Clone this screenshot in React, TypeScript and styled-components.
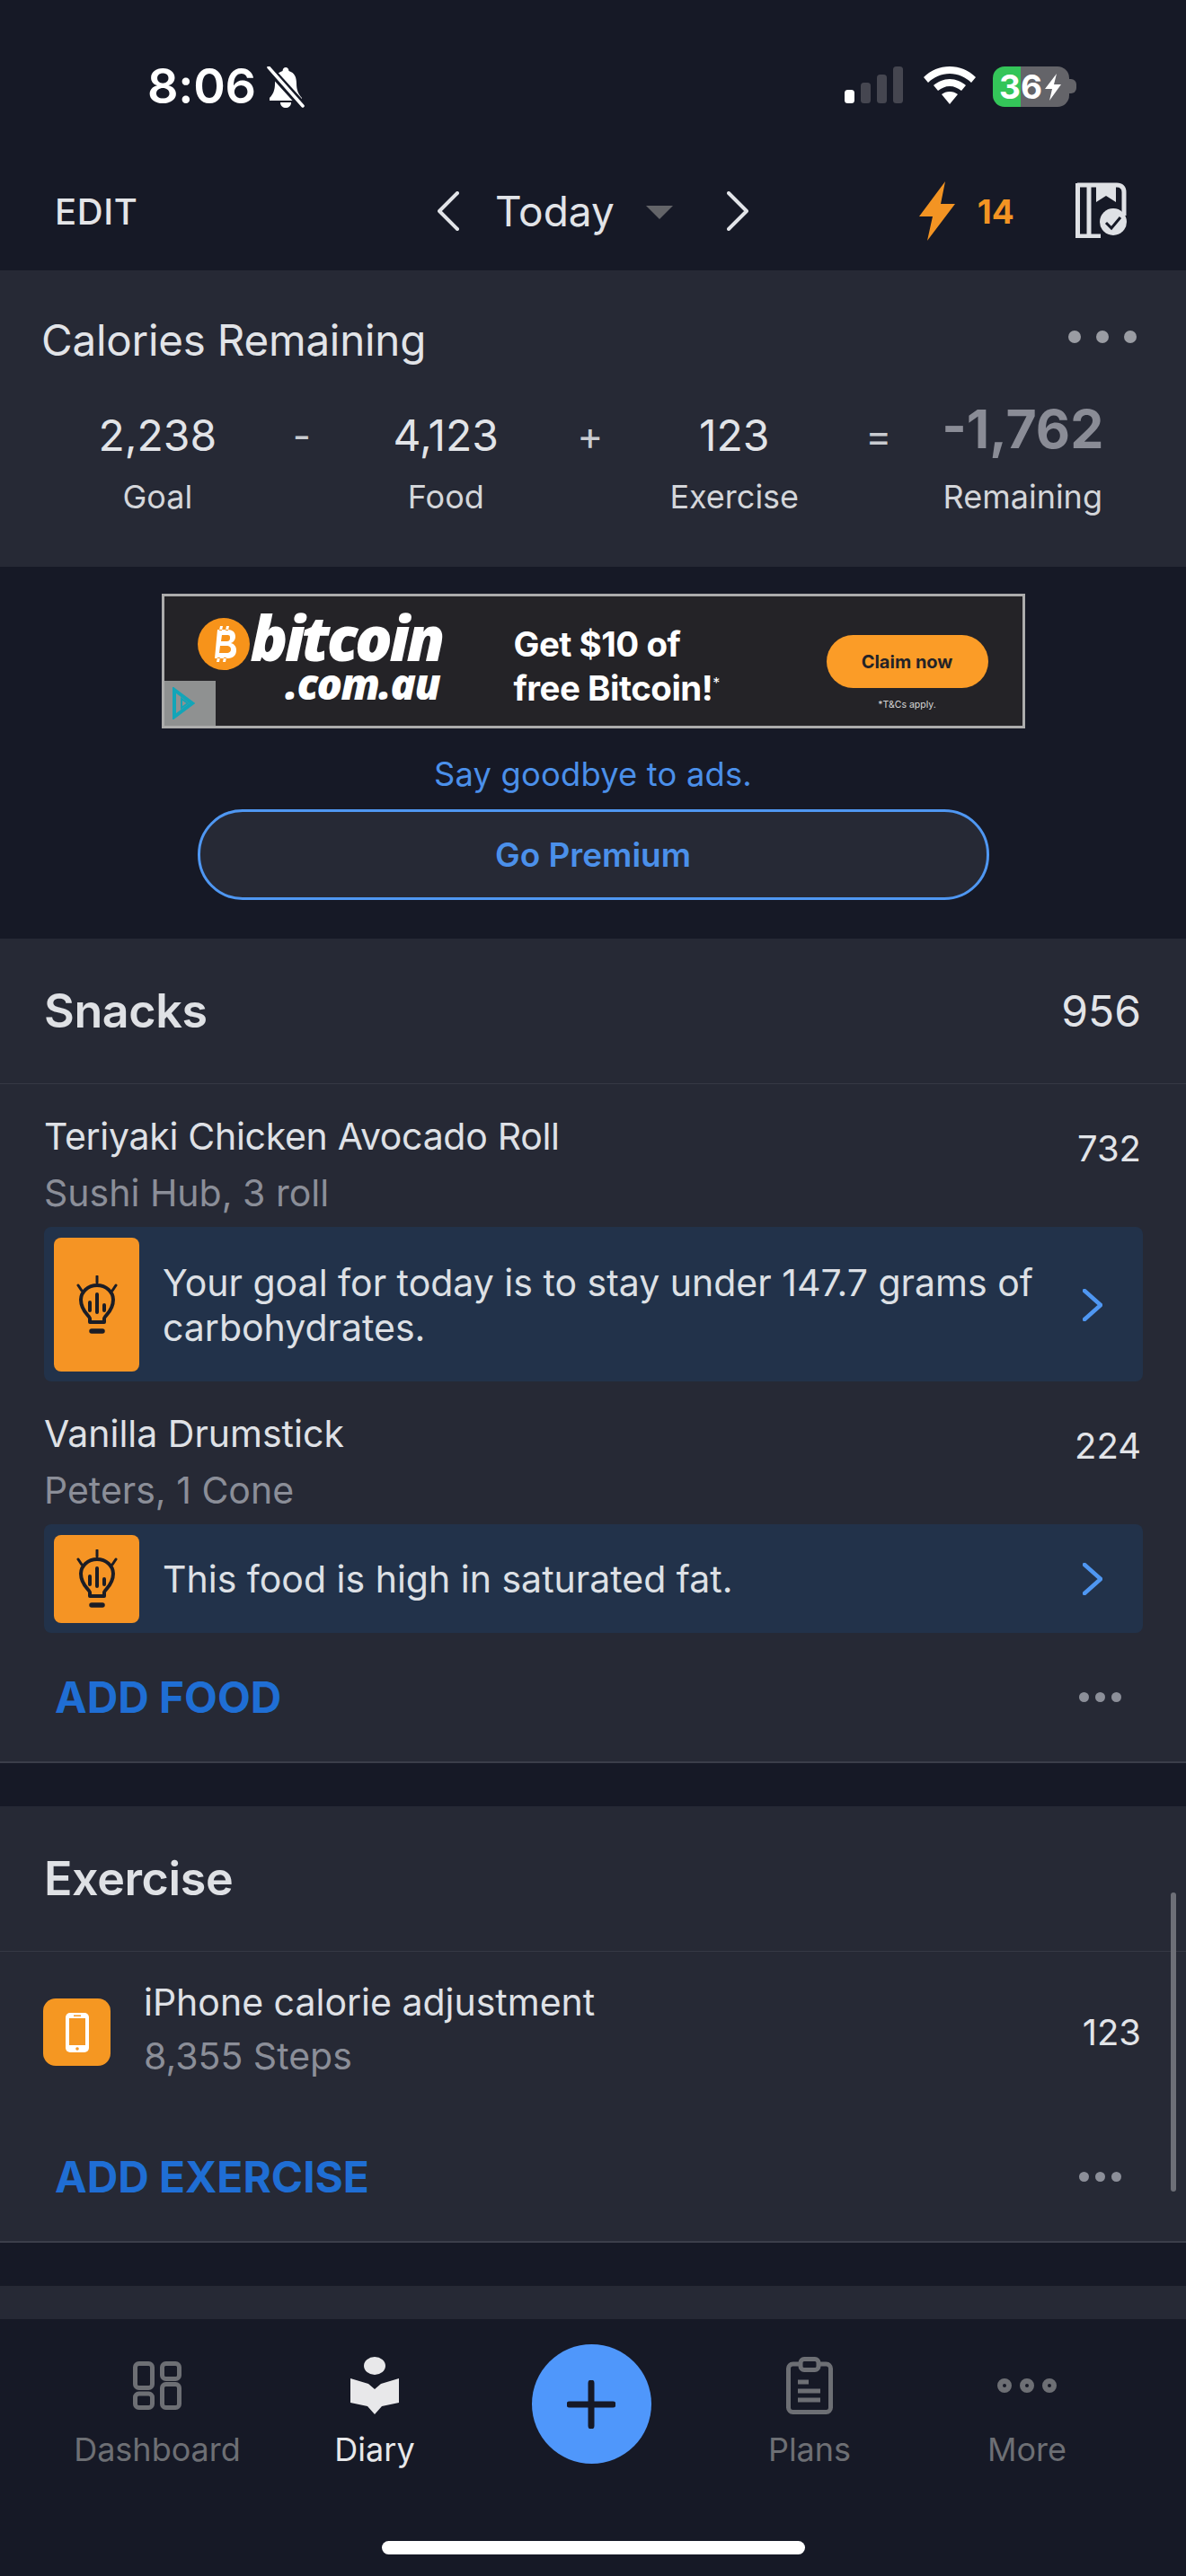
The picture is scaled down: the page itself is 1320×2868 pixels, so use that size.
import React from "react";
import styled, { createGlobalStyle } from "styled-components";

const Global = createGlobalStyle`
  html, body { margin: 0; padding: 0; background: #161926; }
  * { box-sizing: border-box; }
`;

const Page = styled.div`
  width: 1320px; height: 2868px; background: #161926; overflow: hidden; position: relative;
  display: flex; flex-direction: column; font-family: Inter, "Noto Sans", sans-serif; color: #e2e4e8;
`;
const StatusBar = styled.div`
  height: 160px; flex: none; display: flex; justify-content: space-between; padding: 74px 122px 0 164px;
`;
const StatusLeft = styled.div`display: flex; align-items: flex-start; gap: 11px;`;
const Clock = styled.div`font-size: 54px; line-height: 44px; font-weight: 600; color: #fff; letter-spacing: -0.3px;`;
const StatusRight = styled.div`display: flex; align-items: flex-start; gap: 22px;`;
const Battery = styled.div`
  width: 85px; height: 45px; margin-left: -3px; border-radius: 13px; overflow: hidden; position: relative; display: flex;
  align-items: center; padding-left: 7px; font-size: 37px; font-weight: 700; color: #fff; letter-spacing: 0;
  background: linear-gradient(90deg, #34c559 0 31px, #646469 31px 100%);
`;
const BatteryBolt = styled.svg`flex: none; margin-left: 2px;`;
const BatteryNub = styled.div`width: 8px; height: 16px; margin: 14px 0 0 -22px; background: #646469; border-radius: 0 6px 6px 0;`;

const NavBar = styled.div`
  height: 141px; flex: none; display: flex; align-items: center; padding: 9px 65px 0 61px; position: relative;
`;
const EditLabel = styled.div`font-size: 40px; font-weight: 500; color: #e4e5e8; width: 93px; letter-spacing: 0.6px;`;
const DateNav = styled.div`display: flex; align-items: center; margin-left: 333px;`;
const Today = styled.div`font-size: 46px; font-weight: 400; color: #e2e4e8; margin: 0 35px 0 40px;`;
const Caret = styled.div`
  width: 0; height: 0; border-left: 15px solid transparent; border-right: 15px solid transparent;
  border-top: 15px solid #636468; margin-right: 60px; margin-top: 3px;
`;
const Streak = styled.div`display: flex; align-items: center; margin-left: 190px; gap: 25px;`;
const StreakCount = styled.div`font-size: 37px; font-weight: 700; color: #f39423; margin-right: 69px;`;
const ArchiveIcon = styled.svg`position: absolute; left: 1197px; top: 43px;`;

const Scroll = styled.div`flex: 1; min-height: 0; overflow: hidden; position: relative;`;
const Summary = styled.section`height: 330px; background: #262935; padding: 54px 46px 0;`;
const SummaryHead = styled.div`display: flex; justify-content: space-between; align-items: center; height: 46px;`;
const SummaryTitle = styled.div`font-size: 47.500px; font-weight: 400; color: #e2e4e8; letter-spacing: -0.2px;`;
const Dots = styled.div<{ $size: number; $gap: number; $color: string; $mr?: number; $mt?: number }>`
  display: flex; gap: ${p => p.$gap}px; margin: ${p => p.$mt ?? 0}px ${p => p.$mr ?? 0}px 0 0;
  i { display: block; width: ${p => p.$size}px; height: ${p => p.$size}px; border-radius: 50%; background: ${p => p.$color}; }
`;
const Equation = styled.div`
  display: grid; grid-template-columns: repeat(7, 160.5px); margin: 53px 0 0 49px;
`;
const Term = styled.div`display: flex; flex-direction: column; align-items: center; text-align: center;`;
const TermValue = styled.div<{ $big?: boolean }>`
  height: 62px; line-height: 62px; white-space: nowrap;
  font-size: ${p => (p.$big ? 59 : 48)}px; font-weight: ${p => (p.$big ? 700 : 400)};
  color: ${p => (p.$big ? "#8a8c96" : "#e2e4e8")}; margin-top: ${p => (p.$big ? -7 : 0)}px;
  margin-bottom: ${p => (p.$big ? 7 : 0)}px;
`;
const TermLabel = styled.div`font-size: 36px; line-height: 44px; margin-top: 15px; color: #d4d6da; white-space: nowrap;`;
const Operator = styled.div`font-size: 44px; line-height: 62px; text-align: center; color: #c9cbd0;`;

const AdZone = styled.section`height: 414px; padding-top: 30px; display: flex; flex-direction: column; align-items: center;`;
const AdBanner = styled.div`
  width: 961px; height: 150px; border: 3px solid #acacac; background: #242327; position: relative; flex: none;
  display: flex; align-items: flex-start;
`;
const CoinLogo = styled.div`width: 58px; height: 58px; margin: 24px 0 0 37px; flex: none;`;
const AdBrand = styled.div`width: 230px; flex: none; color: #fff; font-family: "Open Sans", sans-serif; font-weight: 800; font-style: italic;`;
const BrandTop = styled.div`font-size: 69px; line-height: 66px; margin: 12px 0 0 1px; letter-spacing: -3.500px;`;
const BrandBottom = styled.div`font-size: 47px; line-height: 38px; margin: 0 0 0 40px; letter-spacing: -1.500px;`;
const AdOffer = styled.div`
  margin: 29px 0 0 64px; width: 348px; flex: none; color: #fff; font-weight: 700; font-size: 38.500px; line-height: 49px; letter-spacing: -0.5px;
  sup { font-size: 16px; font-weight: 400; line-height: 0; vertical-align: 14px; }
`;
const AdCta = styled.div`display: flex; flex-direction: column; align-items: center; width: 180px;`;
const ClaimPill = styled.div`
  margin-top: 43px; width: 180px; height: 59px; border-radius: 30px; background: #fb9c27; color: #242327;
  font-size: 20px; font-weight: 700; display: flex; align-items: center; justify-content: center;
`;
const TermsNote = styled.div`font-size: 10.500px; margin-top: 12px; color: #d8d8d8;`;
const AdChoice = styled.div`
  position: absolute; left: 0; bottom: 0; width: 57px; height: 50px; background: #8f9191;
  display: flex; align-items: center; justify-content: flex-start; padding-left: 8px;
`;
const Goodbye = styled.div`font-size: 36.300px; line-height: 44px; margin-top: 29px; color: #4b90ea; letter-spacing: 0.2px;`;
const PremiumButton = styled.div`
  width: 881px; height: 101px; margin-top: 17px; border: 3px solid #4f97f2; border-radius: 50px; background: #262935;
  display: flex; align-items: center; justify-content: center; color: #4b90ea; font-size: 37px; font-weight: 600;
`;

const Card = styled.section`background: #262935; border-bottom: 2px solid #3b3e4a;`;
const CardHead = styled.div`
  height: 162px; padding: 0 50px 0 49px; display: flex; justify-content: space-between; align-items: center;
  border-bottom: 1px solid #363945;
`;
const CardTitle = styled.div`font-size: 52px; font-weight: 600; color: #dfe1e5; letter-spacing: -0.4px;`;
const CardTotal = styled.div`font-size: 48px; color: #e2e4e8;`;
const FoodRow = styled.div`
  height: 159px; padding: 36px 50px 0 49px; display: flex; justify-content: space-between; align-items: flex-start;
`;
const RowText = styled.div`display: flex; flex-direction: column;`;
const RowName = styled.div<{ $tight?: boolean }>`
  font-size: 41px; line-height: 44px; color: #dfe1e6; letter-spacing: ${p => (p.$tight ? -0.3 : 0)}px;
`;
const RowSub = styled.div`font-size: 41px; line-height: 44px; margin-top: 19px; color: #8b8e98;`;
const RowValue = styled.div`font-size: 40px; line-height: 44px; margin-top: 14px; color: #e2e4e8;`;
const Tip = styled.div<{ $h: number }>`
  height: ${p => p.$h}px; margin: 0 48px 0 49px; padding: 12px 0 11px 11px; background: #22324a; border-radius: 8px;
  display: flex; align-items: stretch;
`;
const TipBadge = styled.div`
  width: 95px; flex: none; background: #f59424; border-radius: 8px; display: flex; align-items: center; justify-content: center;
`;
const TipText = styled.div`
  flex: 1; padding: 0 30px 0 26px; font-size: 41px; line-height: 50px; color: #dde0e5; align-self: center;
`;
const TipArrow = styled.div`width: 67px; flex: none; align-self: center; display: flex; color: #4f97f2;`;
const AddRow = styled.div`
  height: 143px; padding: 0 72px 0 61px; display: flex; justify-content: space-between; align-items: center;
`;
const AddLabel = styled.div`font-size: 47.800px; font-weight: 700; color: #1f6ed4;`;
const Gap = styled.div`height: 48px;`;
const ExerciseRow = styled.div`
  height: 179px; padding: 34px 50px 0 48px; display: flex; align-items: flex-start;
`;
const PhoneBadge = styled.div`
  width: 75px; height: 75px; margin: 18px 37px 0 0; flex: none; border-radius: 14px; background: #f59722;
  display: flex; align-items: center; justify-content: center;
`;
const ExerciseText = styled(RowText)`flex: 1;`;
const ExerciseSub = styled(RowSub)`margin-top: 16px;`;
const ExerciseValue = styled(RowValue)`margin-top: 34px;`;
const NextCardEdge = styled.div`height: 40px; background: #262935;`;
const ScrollThumb = styled.div`
  position: absolute; left: 1303px; top: 1806px; width: 6px; height: 333px; border-radius: 3px; background: #6d6f77;
`;

const TabBar = styled.nav`
  height: 286px; flex: none; background: #161926; position: relative;
  display: grid; grid-template-columns: repeat(5, 242px); padding-left: 54px;
`;
const Tab = styled.div<{ $active?: boolean }>`
  display: flex; flex-direction: column; align-items: center; color: ${p => (p.$active ? "#e8e8ea" : "#6d6f74")};
`;
const TabIcon = styled.div`height: 122px; display: flex; align-items: center; justify-content: center; padding-top: 26px; margin-bottom: 0;`;
const TabLabel = styled.div`font-size: 36px; line-height: 44px; margin-top: 1px;`;
const AddCircle = styled.div`
  width: 133px; height: 133px; margin: 28px 2px 0 0; border-radius: 50%; background: #4f97fb; display: flex; align-items: center; justify-content: center;
`;
const AddCell = styled.div`display: flex; justify-content: center;`;
const HomeBar = styled.div`
  position: absolute; left: 425px; top: 247px; width: 471px; height: 15px; border-radius: 8px; background: #fff;
`;

const ThreeDots = ({ size, gap, color, mr, mt }: { size: number; gap: number; color: string; mr?: number; mt?: number }) => (
  <Dots $size={size} $gap={gap} $color={color} $mr={mr} $mt={mt}><i /><i /><i /></Dots>
);

const Bulb = () => (
  <svg width="48" height="66" viewBox="0 0 48 66" fill="none" stroke="#1b1d26" strokeLinecap="round">
    <path d="M24 1v7M3 11l4 6M45 11l-4 6" strokeWidth="3" />
    <path d="M16 52v-4c0-3-10-8-10-21a18 16 0 0 1 36 0c0 13-10 18-10 21v4z" strokeWidth="4" strokeLinejoin="round" />
    <path d="M24 21v20M16 30v9M32 33v6" strokeWidth="4" />
    <path d="M18 62h12" strokeWidth="5.500" />
  </svg>
);
const Chevron = ({ dir, color, w, h, sw }: { dir: "l" | "r"; color: string; w: number; h: number; sw: number }) => (
  <svg width={w} height={h} viewBox={`0 0 ${w} ${h}`} fill="none" stroke={color} strokeWidth={sw} strokeLinecap="round" strokeLinejoin="round">
    {dir === "l"
      ? <path d={`M${w - 2} 2L2 ${h / 2}L${w - 2} ${h - 2}`} />
      : <path d={`M2 2L${w - 2} ${h / 2}L2 ${h - 2}`} />}
  </svg>
);

export default function App() {
  return (
    <Page>
      <Global />
      <StatusBar>
        <StatusLeft>
          <Clock>8:06</Clock>
          <svg width="44" height="46" viewBox="0 0 44 46">
            <path d="M22 1c2 0 3 1 3.500 4C32 7 34 12 34 19c0 7 2 12 6 16v3H4v-3c4-4 6-9 6-16 0-7 2-12 8.500-14C19 2 20 1 22 1z" fill="#fff" />
            <path d="M16 40h12c0 4-3 6-6 6s-6-2-6-6z" fill="#fff" />
            <path d="M3 2l38 42" stroke="#161926" strokeWidth="9" />
            <path d="M3 1l38 43" stroke="#fff" strokeWidth="3.500" strokeLinecap="round" />
          </svg>
        </StatusLeft>
        <StatusRight>
          <svg width="66" height="44" viewBox="0 0 66 44">
            <rect x="0" y="26" width="11" height="15" rx="3.500" fill="#fff" />
            <rect x="18" y="18" width="11" height="23" rx="3.500" fill="#454650" />
            <rect x="36" y="9" width="11" height="32" rx="3.500" fill="#454650" />
            <rect x="54" y="0" width="11" height="41" rx="3.500" fill="#454650" />
          </svg>
          <svg width="58" height="44" viewBox="0 0 58 44">
            <path d="M29 0c11 0 21 4 29 12l-5 6C47 12 38 8 29 8S11 12 5 18l-5-6C8 4 18 0 29 0z" fill="#fff" />
            <path d="M29 14c7 0 13 3 18 7l-5 6c-4-3-8-5-13-5s-9 2-13 5l-5-6c5-4 11-7 18-7z" fill="#fff" />
            <path d="M29 28c4 0 6 1 9 3L29 42l-9-11c3-2 5-3 9-3z" fill="#fff" />
          </svg>
          <Battery>
            36
            <BatteryBolt width="20" height="30" viewBox="0 0 20 30">
              <path d="M14 0L1 17h8L6 30 19 12h-8z" fill="#fff" />
            </BatteryBolt>
          </Battery>
          <BatteryNub />
        </StatusRight>
      </StatusBar>

      <NavBar>
        <EditLabel>EDIT</EditLabel>
        <DateNav>
          <Chevron dir="l" color="#e2e4e8" w={24} h={44} sw={4} />
          <Today>Today</Today>
          <Caret />
          <Chevron dir="r" color="#e2e4e8" w={24} h={44} sw={4} />
        </DateNav>
        <Streak>
          <svg width="40" height="66" viewBox="0 0 40 66">
            <path d="M29 0L0 39h15L9 66 40 25H24z" fill="#f39423" />
          </svg>
          <StreakCount>14</StreakCount>
        </Streak>
        <ArchiveIcon width="60" height="62" viewBox="0 0 60 62">
          <path d="M2 3h44c5 0 8 3 8 8v26" fill="none" stroke="#dfe1e5" strokeWidth="5" />
          <path d="M2.500 1v59H28" fill="none" stroke="#dfe1e5" strokeWidth="5" />
          <path d="M15 3v55" fill="none" stroke="#dfe1e5" strokeWidth="5" />
          <path d="M23 3h22v19l-11-7-11 7z" fill="#dfe1e5" />
          <circle cx="42" cy="44" r="15" fill="#dfe1e5" />
          <path d="M34 45l6 6 10-12" fill="none" stroke="#161926" strokeWidth="3" />
        </ArchiveIcon>
      </NavBar>

      <Scroll>
        <Summary>
          <SummaryHead>
            <SummaryTitle>Calories Remaining</SummaryTitle>
            <ThreeDots size={14} gap={17} color="#9a9ca3" mr={9} mt={-6} />
          </SummaryHead>
          <Equation>
            <Term><TermValue>2,238</TermValue><TermLabel>Goal</TermLabel></Term>
            <Operator>-</Operator>
            <Term><TermValue>4,123</TermValue><TermLabel>Food</TermLabel></Term>
            <Operator>+</Operator>
            <Term><TermValue>123</TermValue><TermLabel>Exercise</TermLabel></Term>
            <Operator>=</Operator>
            <Term><TermValue $big>-1,762</TermValue><TermLabel>Remaining</TermLabel></Term>
          </Equation>
        </Summary>

        <AdZone>
          <AdBanner>
            <CoinLogo>
              <svg width="58" height="58" viewBox="0 0 58 58">
                <circle cx="29" cy="29" r="29" fill="#f7931a" />
                <path d="M22 13h11c6 0 9 3 9 8 0 3-2 6-5 7 4 1 6 4 6 8 0 6-4 9-10 9H19zm5 6l-1 7h6c3 0 4-1 4-4s-1-3-4-3zm-2 12l-1 8h8c3 0 5-1 5-4s-2-4-5-4zM25 9h3l-1 5h-3zm7 0h3l-1 5h-3zM22 44h3l-1 5h-3zm7 0h3l-1 5h-3z" fill="#fff" fillRule="evenodd" />
              </svg>
            </CoinLogo>
            <AdBrand>
              <BrandTop>bitcoin</BrandTop>
              <BrandBottom>.com.au</BrandBottom>
            </AdBrand>
            <AdOffer>Get $10 of<br />free Bitcoin!<sup>*</sup></AdOffer>
            <AdCta>
              <ClaimPill>Claim now</ClaimPill>
              <TermsNote>*T&amp;Cs apply.</TermsNote>
            </AdCta>
            <AdChoice>
              <svg width="26" height="36" viewBox="0 0 26 36">
                <path d="M3 3l20 15L3 33z" fill="none" stroke="#12a5b8" strokeWidth="4" />
                <path d="M11 13v10l7-5z" fill="none" stroke="#12a5b8" strokeWidth="2" />
              </svg>
            </AdChoice>
          </AdBanner>
          <Goodbye>Say goodbye to ads.</Goodbye>
          <PremiumButton>Go Premium</PremiumButton>
        </AdZone>

        <Card>
          <CardHead><CardTitle>Snacks</CardTitle><CardTotal>956</CardTotal></CardHead>
          <FoodRow>
            <RowText><RowName $tight>Teriyaki Chicken Avocado Roll</RowName><RowSub>Sushi Hub, 3 roll</RowSub></RowText>
            <RowValue>732</RowValue>
          </FoodRow>
          <Tip $h={172}>
            <TipBadge><Bulb /></TipBadge>
            <TipText>Your goal for today is to stay under 147.7 grams of carbohydrates.</TipText>
            <TipArrow><Chevron dir="r" color="#4f97f2" w={22} h={36} sw={4.500} /></TipArrow>
          </Tip>
          <FoodRow>
            <RowText><RowName>Vanilla Drumstick</RowName><RowSub>Peters, 1 Cone</RowSub></RowText>
            <RowValue>224</RowValue>
          </FoodRow>
          <Tip $h={121}>
            <TipBadge><Bulb /></TipBadge>
            <TipText>This food is high in saturated fat.</TipText>
            <TipArrow><Chevron dir="r" color="#4f97f2" w={22} h={36} sw={4.500} /></TipArrow>
          </Tip>
          <AddRow><AddLabel>ADD FOOD</AddLabel><ThreeDots size={11} gap={7} color="#8c8f99" /></AddRow>
        </Card>
        <Gap />
        <Card>
          <CardHead><CardTitle>Exercise</CardTitle></CardHead>
          <ExerciseRow>
            <PhoneBadge>
              <svg width="26" height="44" viewBox="0 0 26 44">
                <rect x="0" y="0" width="26" height="44" rx="5" fill="#fff" />
                <rect x="4" y="6" width="18" height="30" fill="#f59722" />
                <rect x="9" y="2.500" width="8" height="1.500" fill="#f59722" />
                <circle cx="13" cy="40" r="1.800" fill="#f59722" />
              </svg>
            </PhoneBadge>
            <ExerciseText><RowName>iPhone calorie adjustment</RowName><ExerciseSub>8,355 Steps</ExerciseSub></ExerciseText>
            <ExerciseValue>123</ExerciseValue>
          </ExerciseRow>
          <AddRow><AddLabel>ADD EXERCISE</AddLabel><ThreeDots size={11} gap={7} color="#8c8f99" /></AddRow>
        </Card>
        <Gap />
        <NextCardEdge />
        <ScrollThumb />
      </Scroll>

      <TabBar>
        <Tab>
          <TabIcon>
            <svg width="54" height="54" viewBox="0 0 54 54" fill="none" stroke="currentColor" strokeWidth="5">
              <rect x="2.500" y="2.500" width="19" height="27" rx="4" />
              <rect x="32.500" y="2.500" width="19" height="17" rx="4" />
              <rect x="2.500" y="36" width="19" height="15.500" rx="4" />
              <rect x="32.500" y="25.500" width="19" height="26" rx="4" />
            </svg>
          </TabIcon>
          <TabLabel>Dashboard</TabLabel>
        </Tab>
        <Tab $active>
          <TabIcon>
            <svg width="54" height="64" viewBox="0 0 54 64" fill="currentColor">
              <ellipse cx="27" cy="10" rx="12" ry="10" />
              <path d="M0 24l20 6 7 6 7-6 20-6v27l-19 4-8 9-8-9-19-4z" />
            </svg>
          </TabIcon>
          <TabLabel>Diary</TabLabel>
        </Tab>
        <AddCell>
          <AddCircle>
            <svg width="54" height="54" viewBox="0 0 54 54" stroke="#161926" strokeWidth="7" strokeLinecap="round">
              <path d="M27 3v48M3 27h48" />
            </svg>
          </AddCircle>
        </AddCell>
        <Tab>
          <TabIcon>
            <svg width="52" height="64" viewBox="0 0 52 64" fill="none" stroke="currentColor">
              <rect x="2.500" y="8" width="47" height="53.500" rx="5" strokeWidth="5" />
              <rect x="16" y="2.500" width="20" height="12" rx="4" strokeWidth="5" fill="#161926" />
              <path d="M13 28h12M13 38h25M13 48h25" strokeWidth="5" />
            </svg>
          </TabIcon>
          <TabLabel>Plans</TabLabel>
        </Tab>
        <Tab>
          <TabIcon>
            <svg width="66" height="16" viewBox="0 0 66 16" fill="none" stroke="currentColor" strokeWidth="6">
              <circle cx="8" cy="8" r="5" /><circle cx="33" cy="8" r="5" /><circle cx="58" cy="8" r="5" />
            </svg>
          </TabIcon>
          <TabLabel>More</TabLabel>
        </Tab>
        <HomeBar />
      </TabBar>
    </Page>
  );
}
